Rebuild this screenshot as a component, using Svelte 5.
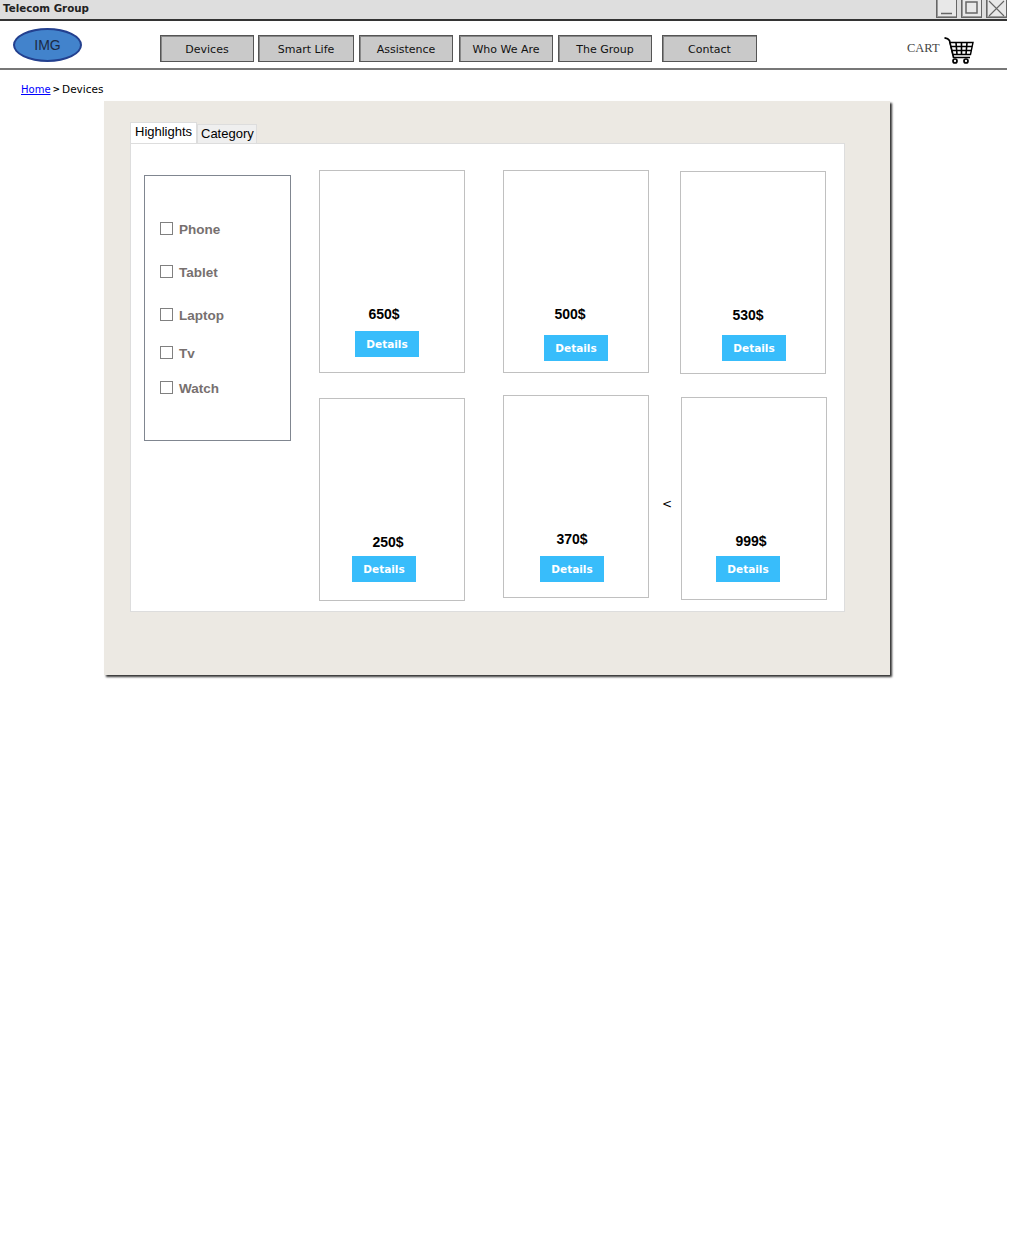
<script>
  const nav = [
    { label: 'Devices', cls: 'n1' },
    { label: 'Smart Life', cls: 'n2' },
    { label: 'Assistence', cls: 'n3' },
    { label: 'Who We Are', cls: 'n4' },
    { label: 'The Group', cls: 'n5' },
    { label: 'Contact', cls: 'n6' }
  ];
  const filters = ['Phone', 'Tablet', 'Laptop', 'Tv', 'Watch'];
  const products = [
    { price: '650$', cls: 'c1' },
    { price: '500$', cls: 'c2' },
    { price: '530$', cls: 'c3' },
    { price: '250$', cls: 'c4' },
    { price: '370$', cls: 'c5' },
    { price: '999$', cls: 'c6' }
  ];
</script>

<div class="page">
  <div class="titlebar">
    <span class="title">Telecom Group</span>
    <div class="winbtns">
      <span class="win"><svg width="21" height="18" viewBox="0 0 21 18"><path d="M5 13.5H16" stroke="#666" stroke-width="1.5" fill="none"/></svg></span>
      <span class="win"><svg width="21" height="18" viewBox="0 0 21 18"><rect x="5" y="2" width="11" height="11" stroke="#666" stroke-width="1.5" fill="none"/></svg></span>
      <span class="win"><svg width="21" height="18" viewBox="0 0 21 18"><path d="M3 1L18 16M18 1L3 16" stroke="#666" stroke-width="1.1" fill="none"/></svg></span>
    </div>
  </div>

  <header class="header">
    <div class="logo">IMG</div>
    <nav class="nav">
      {#each nav as n}
        <a class="navbtn {n.cls}" href="#top">{n.label}</a>
      {/each}
    </nav>
    <div class="cart">
      <span class="carttext">CART</span>
      <svg width="30" height="28" viewBox="0 0 30 28">
        <path d="M0.5 0.8C3 1.2 4.5 2 5.5 3.5L9.5 20.5H26" fill="none" stroke="#000" stroke-width="1.7"/>
        <path d="M6 5.5H29L26.5 17.5H9Z" fill="#fff" stroke="#000" stroke-width="1.4"/>
        <path d="M7 9.5H28M8 13.5H27.4M12 5.5L13 17.5M17.5 5.5V17.5M23 5.5L22 17.5" fill="none" stroke="#000" stroke-width="1.6"/>
        <circle cx="11" cy="24" r="2" fill="#fff" stroke="#000" stroke-width="1.7"/>
        <circle cx="22" cy="24" r="2" fill="#fff" stroke="#000" stroke-width="1.7"/>
      </svg>
    </div>
  </header>

  <div class="crumbs"><a href="#top">Home</a><span class="sep">&gt;</span><span>Devices</span></div>

  <main class="panel">
    <div class="tabs">
      <span class="tab active">Highlights</span>
      <span class="tab">Category</span>
    </div>
    <section class="tabbody">
      <aside class="filters">
        {#each filters as f}
          <label class="filter"><span class="box"></span>{f}</label>
        {/each}
      </aside>
      <div class="cards">
        {#each products as p}
          <article class="card {p.cls}">
            <div class="price">{p.price}</div>
            <button class="details">Details</button>
          </article>
        {/each}
        <span class="prev">&lt;</span>
      </div>
    </section>
  </main>
</div>

<style>
  :global(body) { margin: 0; background: #fff; }
  .page { width: 1009px; height: 1245px; font-family: "DejaVu Sans", sans-serif; color: #000; overflow: hidden; }

  .titlebar { width: 1007px; height: 19px; background: #dedede; border-bottom: 2px solid #333; display: flex; justify-content: space-between; }
  .title { font: bold 10.3px/17px "DejaVu Sans", sans-serif; margin-left: 3px; color: #222; }
  .winbtns { display: flex; gap: 4px; margin-left: auto; }
  .win { box-sizing: border-box; width: 21px; height: 18px; border: 1px solid #666; border-top: 0; box-shadow: inset 1px -1px 0 #999; background: #e8e8e8; display: block; overflow: hidden; }
  .win svg { display: block; margin-left: -1px; }

  .header { width: 1007px; height: 47px; border-bottom: 2px solid #777; display: flex; align-items: flex-start; position: relative; }
  .logo { width: 65px; height: 30px; margin: 7px 0 0 13px; border: 2px solid #23408f; border-radius: 50%; background: #4283cc; color: #1c2a44; font: 14px/30px "Liberation Sans", sans-serif; text-align: center; }
  .nav { display: flex; margin: 14px 0 0 78px; }
  .navbtn { box-sizing: border-box; height: 27px; width: 94px; background: #c9c9c9; border: 1px solid #555; box-shadow: inset 1px 1px 0 #888; color: #111; text-decoration: none; font: 11px/27px "DejaVu Sans", sans-serif; text-align: center; }
  .n1 { margin-right: 4px; }
  .n2 { width: 96px; margin-right: 5px; }
  .n3 { margin-right: 6px; }
  .n4 { margin-right: 5px; }
  .n5 { margin-right: 10px; }
  .n6 { width: 95px; }
  .cart { display: flex; align-items: flex-start; margin: 16px 0 0 150px; }
  .carttext { font: 12.5px/23px "Liberation Serif", serif; color: #444; width: 32px; margin-right: 5px; white-space: nowrap; }

  .crumbs { font: 10.5px/15px "DejaVu Sans", sans-serif; margin: 12px 0 0 21px; height: 16px; display: flex; }
  .crumbs a { color: #00f; font-size: 10px; }
  .sep { font-weight: bold; font-size: 9px; margin: 0 2px; }

  .panel { box-sizing: border-box; width: 786px; height: 574px; margin: 3px 0 0 104px; background: #ece9e3; box-shadow: 2px 2px 2px #333; padding: 21px 0 0 26px; }
  .tabs { display: flex; align-items: flex-end; height: 21px; position: relative; }
  .tab { box-sizing: border-box; height: 19px; width: 60px; padding: 0 0 0 3px; background: #efefef; border: 1px solid #ddd; border-bottom: 0; font: 13px/18px "Liberation Sans", sans-serif; }
  .tab.active { height: 21px; width: 67px; padding-left: 4px; background: #fff; line-height: 17px; }

  .tabbody { box-sizing: border-box; width: 715px; height: 469px; background: #fff; border: 1px solid #ddd; display: flex; align-items: flex-start; }

  .filters { box-sizing: border-box; width: 147px; height: 266px; margin: 31px 0 0 13px; border: 1px solid #808690; padding: 46px 0 0 15px; }
  .filter { display: flex; align-items: flex-start; height: 16px; font: bold 13.5px/16px "Liberation Sans", sans-serif; color: #77706f; margin-bottom: 27px; }
  .filter:nth-child(3) { margin-bottom: 22px; }
  .filter:nth-child(4) { margin-bottom: 19px; }
  .box { box-sizing: border-box; width: 13px; height: 13px; border: 1px solid #808080; margin-right: 6px; }

  .cards { position: relative; display: grid; grid-template-columns: 184px 177px 146px; grid-auto-rows: 225px; margin: 26px 0 0 28px; }
  .card { box-sizing: border-box; width: 146px; height: 203px; border: 1px solid #c0c0c0; display: flex; flex-direction: column; justify-content: flex-end; align-items: flex-start; }
  .price { width: 64px; text-align: center; font: bold 14px/16px "Liberation Sans", sans-serif; color: #000; }
  .details { box-sizing: border-box; width: 64px; height: 26px; padding: 0 0 0 0; border: 0; background: #38bdfb; color: #fff; font: bold 10.5px/27px "DejaVu Sans", sans-serif; }

  .c1 { padding-bottom: 15px; }
  .c1 .price { margin: 0 0 9px 32px; }
  .c1 .details { margin-left: 35px; }
  .c2 { padding-bottom: 11px; }
  .c2 .price { margin: 0 0 13px 34px; }
  .c2 .details { margin-left: 40px; }
  .c3 { margin-top: 1px; padding-bottom: 12px; }
  .c3 .price { margin: 0 0 12px 35px; }
  .c3 .details { margin-left: 41px; }
  .c4 { margin-top: 3px; padding-bottom: 18px; }
  .c4 .price { margin: 0 0 6px 36px; }
  .c4 .details { margin-left: 32px; }
  .c5 { padding-bottom: 15px; }
  .c5 .price { margin: 0 0 9px 36px; }
  .c5 .details { margin-left: 36px; }
  .c6 { margin: 2px 0 0 1px; padding-bottom: 17px; }
  .c6 .price { margin: 0 0 7px 37px; }
  .c6 .details { margin-left: 34px; }

  .prev { position: absolute; left: 343px; top: 326px; font: 12px/16px "DejaVu Sans", sans-serif; }
</style>
